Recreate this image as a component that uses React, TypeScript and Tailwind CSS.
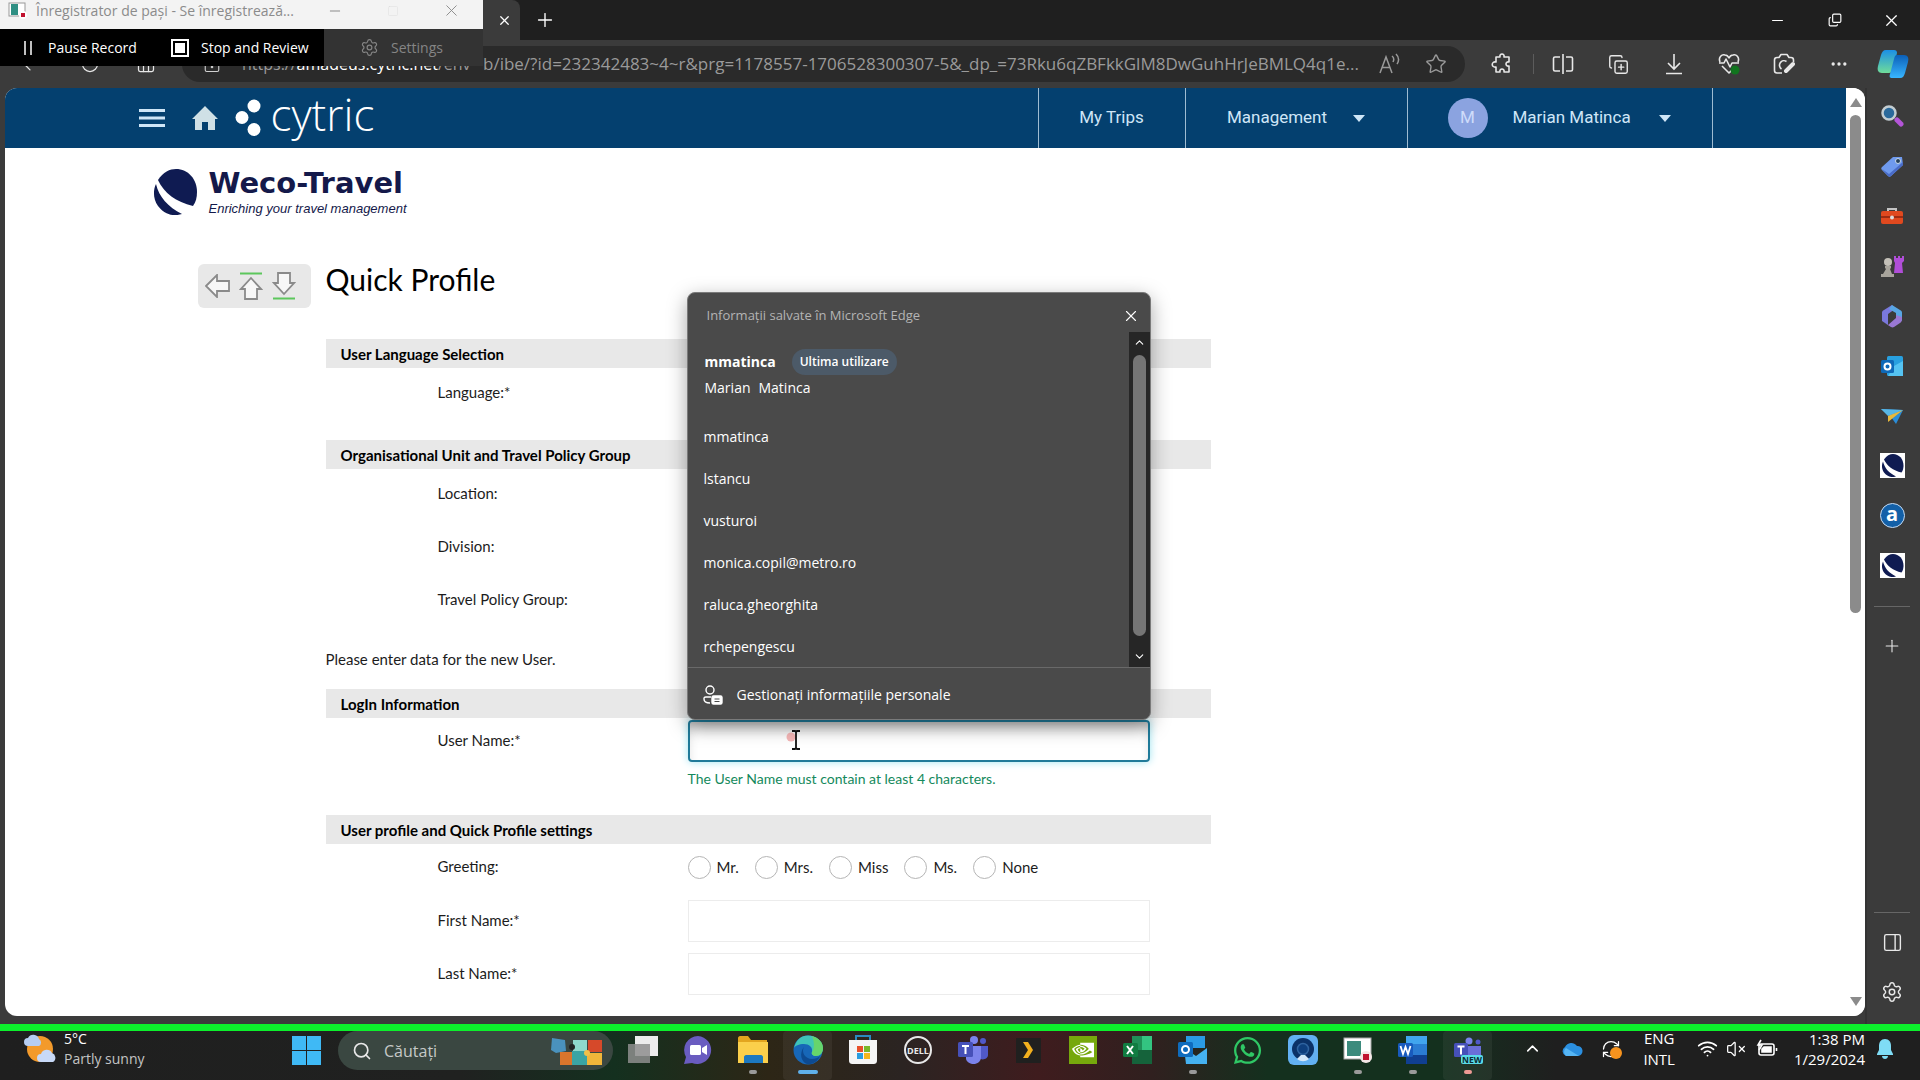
import type {ReactNode} from "react";
import {
  ChevronDown, ChevronUp, Copy, CopyPlus, Ellipsis, House, LockKeyhole,
  Minus, PanelRight, Pause, Plus, RefreshCw, RotateCw, Search, Settings, Square, Star, VolumeX, Wifi, X, ArrowLeft,
} from "lucide-react";
import {FaWhatsapp} from "react-icons/fa";
import {SiNvidia} from "react-icons/si";
import clsx from "clsx";

const suggestions = ["mmatinca", "lstancu", "vusturoi", "monica.copil@metro.ro", "raluca.gheorghita", "rchepengescu"];
const greetings = ["Mr.", "Mrs.", "Miss", "Ms.", "None"];

function Globe({className}: { className?: string }) {
  return (
    <svg viewBox="0 0 44 46" className={className}>
      <path d="M5 11C10 3 17 0 23 0c12 0 21 10 21 23 0 5-1 10-4 14C23 33 11 24 5 11Z" fill="#0f1b52"/>
      <path d="M3 15C0 21 0 30 5 37c6 8 15 11 24 8C15 38 6 28 3 15Z" fill="#0f1b52"/>
    </svg>
  );
}

function IconButton({label, children, className}: { label: string; children: ReactNode; className?: string }) {
  return (
    <button type="button" aria-label={label} className={clsx("flex shrink-0 items-center justify-center", className)}>
      {children}
    </button>
  );
}

/* Floating steps recorder window */
function Recorder() {
  return (
    <div className="absolute left-0 top-0 z-20 w-[483px] text-[14px]">
      <div className="flex h-[29px] items-center bg-[#f3f3f3] pb-2 text-[#8b8b8b]">
        <svg viewBox="0 0 20 18" className="ml-2 h-[18px] w-5 shrink-0">
          <rect x="1" y="1" width="16" height="13" fill="#fff" stroke="#999"/>
          <rect x="3" y="2" width="7" height="11" fill="#2f8f83"/>
          <circle cx="15" cy="13" r="4" fill="#fff"/>
          <rect x="13" y="11" width="4" height="4" fill="#c1122f"/>
        </svg>
        <span className="ml-2 w-[270px] whitespace-nowrap">Înregistrator de pași - Se înregistrează...</span>
        <IconButton label="Minimize" className="ml-3 w-[34px]"><Minus size={16} strokeWidth={1.5}/></IconButton>
        <IconButton label="Maximize" className="ml-6 w-[34px]"><Square size={12} strokeWidth={1} className="text-[#dddddd]"/></IconButton>
        <IconButton label="Close" className="ml-6 w-[34px]"><X size={19} strokeWidth={1.2}/></IconButton>
      </div>
      <div className="flex h-[37px] bg-black text-white">
        <button type="button" className="flex w-[156px] items-center gap-3 pl-5">
          <svg viewBox="0 0 16 16" className="size-4" stroke="#fff" strokeWidth="1.500"><path d="M5 1v14M11 1v14"/></svg>
          Pause Record
        </button>
        <button type="button" className="flex w-[168px] items-center gap-3 pl-[15px]">
          <span className="flex size-[18px] items-center justify-center border-2 border-white"><span className="size-[10px] bg-white"/></span>
          Stop and Review
        </button>
        <button type="button" className="flex flex-1 items-center gap-3 bg-[#333333] pl-9 text-[#858585]">
          <Settings size={19} strokeWidth={1.5}/>
          Settings
        </button>
      </div>
    </div>
  );
}

function TitleBar() {
  return (
    <div className="flex h-10 shrink-0 items-center bg-[#1f1f1f] text-white">
      <div className="flex h-10 w-[520px] items-center justify-end rounded-tr-lg bg-[#3b3b3b] pr-2">
        <IconButton label="Close tab"><X size={15} strokeWidth={2}/></IconButton>
      </div>
      <IconButton label="New tab" className="ml-3.5"><Plus size={22} strokeWidth={1.5}/></IconButton>
      <div className="ml-auto flex">
        <IconButton label="Minimize" className="w-[57px]"><Minus size={17} strokeWidth={1.5}/></IconButton>
        <IconButton label="Restore" className="w-[57px]"><Copy size={14} strokeWidth={2} className="-rotate-90"/></IconButton>
        <IconButton label="Close" className="w-[57px]"><X size={19} strokeWidth={1.5}/></IconButton>
      </div>
    </div>
  );
}

function CopilotIcon() {
  return (
    <svg viewBox="0 0 32 30" className="h-[30px] w-8">
      <defs>
        <linearGradient id="cop1" x1="0" y1="0" x2="0" y2="1"><stop stopColor="#1b8fe6"/><stop offset="1" stopColor="#6fdc9a"/></linearGradient>
        <linearGradient id="cop2" x1="0" y1="0" x2="0" y2="1"><stop stopColor="#0b5fb8"/><stop offset="1" stopColor="#38b6ff"/></linearGradient>
      </defs>
      <path d="M9 1h8c2 0 3 1 3 3l-4 16c-1 3-2 4-4 4H5c-4 0-5-3-4-7L4 6c1-3 2-5 5-5Z" fill="url(#cop1)"/>
      <path d="M20 6h7c4 0 5 3 4 7l-3 11c-1 3-2 5-5 5h-8c-2 0-3-1-2-4l4-15c1-3 1-4 3-4Z" fill="url(#cop2)"/>
    </svg>
  );
}

function Toolbar() {
  return (
    <div className="flex h-12 shrink-0 items-center bg-[#3b3b3b] text-[#e8e8e8]">
      <div className="flex w-[182px] shrink-0 items-center">
        <IconButton label="Back" className="ml-5"><ArrowLeft size={20} strokeWidth={1.5}/></IconButton>
        <IconButton label="Refresh" className="ml-10"><RotateCw size={20} strokeWidth={1.5}/></IconButton>
        <IconButton label="Home" className="ml-9"><House size={20} strokeWidth={1.5}/></IconButton>
      </div>
      <div className="flex h-[36px] min-w-0 flex-1 items-center rounded-full bg-[#2a2a2a] pr-[18px] text-[17px] text-[#9a9a9a]">
        <LockKeyhole size={18} strokeWidth={1.5} className="ml-[21px] shrink-0 text-[#d0d0d0]"/>
        <span className="ml-[21px] w-[241px] shrink-0 whitespace-nowrap text-[16px]">https://<span className="text-white">amadeus.cytric.net</span>/env</span>
        <span className="whitespace-nowrap">b/ibe/?id=232342483~4~r&amp;prg=1178557-1706528300307-5&amp;_dp_=73Rku6qZBFkkGlM8DwGuhHrJeBMLQ4q1e...</span>
        <button type="button" aria-label="Read aloud" className="ml-auto shrink-0 pl-4">
          <svg viewBox="0 0 22 22" className="size-[22px]" fill="none" stroke="currentColor" strokeWidth="1.500">
            <path d="M1 20 7 4l6 16M3 14.500h8M13 3c2 1.500 2 4 1 6M17 1c3 3 3 7 1 10"/>
          </svg>
        </button>
        <IconButton label="Add to favourites" className="ml-6"><Star size={22} strokeWidth={1.5}/></IconButton>
      </div>
      <div className="flex shrink-0 items-center">
        <IconButton label="Extensions" className="ml-[18px] w-[38px]">
          <svg viewBox="0 0 22 22" className="size-[22px]" fill="none" stroke="currentColor" strokeWidth="1.600" strokeLinejoin="round">
            <path d="M5 4h4c-1-4 5-4 4 0h5v5c-4-1-4 5 0 4v6h-5c1-4-5-4-4 0H5v-5c-5 1-5-6 0-5Z"/>
          </svg>
        </IconButton>
        <span className="ml-3 h-5 w-px bg-[#5c5c5c]"/>
        <IconButton label="Split screen" className="w-[57px]">
          <svg viewBox="0 0 22 22" className="size-[22px]" fill="none" stroke="currentColor" strokeWidth="1.600">
            <path d="M11 1v20M8 4H3c-1 0-1.500.5-1.500 1.500v11c0 1 .5 1.500 1.500 1.500h5M14 4h5c1 0 1.500.5 1.500 1.500v11c0 1-.5 1.500-1.500 1.500h-5"/>
          </svg>
        </IconButton>
        <IconButton label="Collections" className="w-[55px]"><CopyPlus size={21} strokeWidth={1.6}/></IconButton>
        <IconButton label="Downloads" className="w-[55px]">
          <svg viewBox="0 0 20 22" className="h-[22px] w-5" fill="none" stroke="currentColor" strokeWidth="1.600"><path d="M10 1v15M4 10l6 6 6-6M2 20.500h16"/></svg>
        </IconButton>
        <IconButton label="Browser essentials" className="w-[55px]">
          <svg viewBox="0 0 22 22" className="size-[22px]" fill="none" stroke="currentColor" strokeWidth="1.600" strokeLinejoin="round">
            <path d="M2 9C0 4 4 1 7 2c2 0 3 1 4 3 1-2 2-3 4-3 3-1 7 2 5 7M4 13l7 7 3-3M1 10h5l2-4 4 8 2-4h7"/>
            <circle cx="17" cy="17" r="4.500" fill="#11751f" stroke="none"/>
          </svg>
        </IconButton>
        <IconButton label="Web capture" className="w-[55px]">
          <svg viewBox="0 0 22 22" className="size-[22px]" fill="none" stroke="currentColor" strokeWidth="1.600" strokeLinejoin="round">
            <path d="M9 20H4c-2 0-2.500-1-2.500-2.500V7C1.500 5 2 4.500 4 4.500h2L8 1.500h6l2 3h2c2 0 2.500.5 2.500 2.500v2"/>
            <path d="M13.500 8.500a4.500 4.500 0 1 0-5 7.500"/>
            <path d="M20 11l-7 7" strokeWidth="4" strokeLinecap="round"/>
          </svg>
        </IconButton>
        <IconButton label="More" className="w-[55px]"><Ellipsis size={20} strokeWidth={2}/></IconButton>
        <IconButton label="Copilot" className="w-[54px]"><CopilotIcon/></IconButton>
      </div>
    </div>
  );
}

function Caret() {
  return <svg viewBox="0 0 12 7" className="h-[7px] w-3" fill="currentColor"><path d="M0 0h12L6 7Z"/></svg>;
}

function SiteHeader() {
  return (
    <header className="flex h-[60px] shrink-0 bg-[#04406f] font-[Roboto,sans-serif] text-[17px] text-[#cfe6f7]">
      <div className="mx-auto flex w-full max-w-[1574px]">
        <IconButton label="Menu">
          <svg viewBox="0 0 26 20" className="h-5 w-[26px]" fill="#cfe6f7"><path d="M0 1h26v3H0zM0 8.500h26v3H0zM0 16h26v3H0z"/></svg>
        </IconButton>
        <IconButton label="Home" className="ml-[27px]">
          <svg viewBox="0 0 26 24" className="h-6 w-[26px]" fill="#cfe0e6"><path d="M13 0 26 13h-3v11h-7v-8h-6v8H3V13H0Z"/></svg>
        </IconButton>
        <a href="#home" className="ml-[17px] flex items-center gap-[10px] text-white">
          <svg viewBox="0 0 26 38" className="h-[38px] w-[26px]" fill="#fff">
            <circle cx="19" cy="7" r="6.500"/><circle cx="7" cy="18.500" r="6.500"/><circle cx="19" cy="30.500" r="6.500"/>
          </svg>
          <span className="pb-2 font-['Open_Sans',sans-serif] text-[44px] font-light leading-[50px]">cytric</span>
        </a>
        <nav className="ml-auto flex border-r border-[#9fbcd2]">
          <a href="#trips" className="flex w-[147px] items-center justify-center border-l border-[#9fbcd2]">My Trips</a>
          <button type="button" className="flex w-[222px] items-center justify-center gap-[26px] border-l border-[#9fbcd2]">Management<Caret/></button>
          <button type="button" className="flex w-[305px] items-center border-l border-[#9fbcd2] pl-10">
            <span className="mr-[25px] flex size-10 items-center justify-center rounded-full bg-[#8ba3e0] text-[17px] text-[#cfdcfa]">M</span>
            <span className="mr-[28px]">Marian Matinca</span>
            <Caret/>
          </button>
        </nav>
      </div>
    </header>
  );
}

function SectionBar({children}: { children: ReactNode }) {
  return <h2 className="h-[29px] bg-[#e8e8e8] px-[15px] font-bold leading-[30px] text-black">{children}</h2>;
}

function Field({id, label, children}: { id: string; label: string; children?: ReactNode }) {
  return (
    <div className="flex pl-28">
      <label htmlFor={id} className="w-[250px] shrink-0 leading-10">{label}</label>
      <div className="mr-[61px] min-w-0 flex-1">
        {children ?? <input id={id} type="text" className="block h-[42px] w-full border border-[#ececec] px-3"/>}
      </div>
    </div>
  );
}

/* Browser autofill list, opens above the user name box */
function AutofillPopup() {
  return (
    <div className="absolute -inset-x-px bottom-full z-10 overflow-hidden rounded-lg border border-[#7a7a7a] bg-[#4a4a4a] font-['Open_Sans',sans-serif] text-[14px] text-white shadow-[0_6px_20px_rgba(0,0,0,0.35)]">
      <div className="flex h-[39px] items-center justify-between pl-[19px] pr-[10px] text-[13px] text-[#b4b4b4]">
        <span className="pt-1.5">Informații salvate în Microsoft Edge</span>
        <IconButton label="Close suggestions" className="pt-1.5 text-white"><X size={18} strokeWidth={1.5}/></IconButton>
      </div>
      <div className="flex h-[335px]">
        <ul className="min-w-0 flex-1 overflow-hidden pl-4">
          <li className="pb-[14px] pt-[17px]">
            <button type="button" className="block pl-px text-left">
              <span className="flex items-center gap-4 leading-[26px]">
                <b>mmatinca</b>
                <span className="rounded-full bg-[#4c5a68] px-2 text-[12px] font-semibold">Ultima utilizare</span>
              </span>
              <span className="flex gap-2 leading-[26px]"><span>Marian</span><span>Matinca</span></span>
            </button>
          </li>
          {suggestions.map((s) => (
            <li key={s} className="flex h-[42px] items-center"><button type="button">{s}</button></li>
          ))}
        </ul>
        <div className="flex w-[21px] flex-col items-center justify-between bg-[#262626] py-1">
          <ChevronUp size={13}/>
          <span className="my-[6px] w-[13px] flex-1 rounded-full bg-[#757575]"/>
          <ChevronDown size={13} className="mt-2"/>
        </div>
      </div>
      <button type="button" className="flex h-[52px] w-full items-center gap-[14px] border-t border-[#696969] pl-[15px] pt-0.5">
        <svg viewBox="0 0 20 20" className="size-5" fill="none" stroke="#fff" strokeWidth="1.400">
          <circle cx="7" cy="5" r="4"/>
          <path d="M8 12H3c-2 0-2 1-2 2 0 2 2 4 6 4"/>
          <rect x="9" y="11" width="10" height="8" rx="1.500" fill="#fff"/>
          <path d="M11.500 14h5M11.500 16.500h5" stroke="#4a4a4a" strokeWidth="1"/>
        </svg>
        Gestionați informațiile personale
      </button>
    </div>
  );
}

function PageTools() {
  return (
    <div className="flex h-11 w-[113px] shrink-0 items-center gap-[9px] rounded-md bg-[#e8e8e8] pl-[7px]">
      <IconButton label="Back">
        <svg viewBox="0 0 25 24" className="h-6 w-[25px]" fill="#f7f7f7" stroke="#8a8a8a" strokeWidth="1.800"><path d="M1 12 12 1v6h12v10H12v6Z"/></svg>
      </IconButton>
      <IconButton label="Top of page">
        <svg viewBox="0 0 24 28" className="h-7 w-6" fill="#f7f7f7" stroke="#8a8a8a" strokeWidth="1.800">
          <path d="M1 1.500h22" stroke="#5cc75c" strokeWidth="2"/><path d="M12 6 22 17h-4v10H6V17H2Z"/>
        </svg>
      </IconButton>
      <IconButton label="End of page">
        <svg viewBox="0 0 24 28" className="h-7 w-6" fill="#f7f7f7" stroke="#8a8a8a" strokeWidth="1.800">
          <path d="M1 26.500h22" stroke="#5cc75c" strokeWidth="2"/><path d="M12 22 22 11h-4V1H6v10H2Z"/>
        </svg>
      </IconButton>
    </div>
  );
}

function ProfilePage() {
  return (
    <main className="mx-auto w-full max-w-[1574px] font-[Lato,sans-serif] text-[15px] text-[#1c1c1c]">
      <div className="flex gap-3 pl-[14px] pt-[21px]">
        <Globe className="h-[46px] w-11"/>
        <div className="text-[#14194a]">
          <div className="font-['DejaVu_Sans',sans-serif] text-[29px] font-bold leading-7">Weco-Travel</div>
          <div className="pt-0.5 font-['Liberation_Sans',sans-serif] text-[13px] italic leading-5">Enriching your travel management</div>
        </div>
      </div>
      <div className="flex items-start gap-[15px] pl-[59px] pt-[45px]">
        <PageTools/>
        <form className="w-full max-w-[885px]">
          <h1 className="mb-[45px] text-[30px] leading-[30px] text-black">Quick Profile</h1>
          <SectionBar>User Language Selection</SectionBar>
          <div className="mb-[26px] mt-1"><Field id="language" label="Language:*"/></div>
          <SectionBar>Organisational Unit and Travel Policy Group</SectionBar>
          <div className="mt-1 flex flex-col gap-[11px]">
            <Field id="location" label="Location:"/>
            <Field id="division" label="Division:"/>
            <Field id="policy" label="Travel Policy Group:"/>
          </div>
          <p className="mb-5 mt-7 leading-5">Please enter data for the new User.</p>
          <SectionBar>LogIn Information</SectionBar>
          <div className="mb-[26px] mt-0.5">
            <Field id="username" label="User Name:*">
              <div className="relative">
                <AutofillPopup/>
                <input id="username" type="text" aria-describedby="username-hint"
                  className="block h-[42px] w-full rounded-sm border-2 border-[#1f7a99] px-3 shadow-[0_0_8px_#9fe4f0,inset_0_10px_14px_-6px_rgba(0,0,0,0.3)] outline-none"/>
                <svg viewBox="0 0 16 20" className="pointer-events-none absolute left-[98px] top-[10px] h-5 w-4">
                  <circle cx="5" cy="7" r="4.500" fill="#f4b6b6"/>
                  <path d="M6 1h3l1 1 1-1h3M6 19h3l1-1 1 1h3M10 2v16" stroke="#111" strokeWidth="1.800" fill="none"/>
                </svg>
              </div>
              <p id="username-hint" className="mt-[7px] text-[14px] leading-5 text-[#14895c]">The User Name must contain at least 4 characters.</p>
            </Field>
          </div>
          <SectionBar>User profile and Quick Profile settings</SectionBar>
          <div className="mt-0.5 flex flex-col gap-[11px]">
            <div role="radiogroup" aria-labelledby="greeting" className="flex h-[43px] pl-28">
              <span id="greeting" className="w-[250px] shrink-0 leading-10">Greeting:</span>
              <div className="flex items-center gap-4">
                {greetings.map((g) => (
                  <label key={g} className="flex items-center gap-[6px]">
                    <input type="radio" name="greeting" className="size-[23px] appearance-none rounded-full border border-[#b5b5b5] bg-white"/>
                    {g}
                  </label>
                ))}
              </div>
            </div>
            <Field id="first" label="First Name:*"/>
            <Field id="last" label="Last Name:*"/>
          </div>
        </form>
      </div>
    </main>
  );
}

function PageScrollbar() {
  return (
    <div className="flex w-[19px] shrink-0 flex-col items-center bg-white py-[10px] text-[#8b8b8b]">
      <svg viewBox="0 0 12 9" className="h-[9px] w-3" fill="currentColor"><path d="M6 0l6 9H0Z"/></svg>
      <div className="my-2 flex w-[11px] flex-1 flex-col"><span className="h-[57%] rounded-full bg-[#8b8b8b]"/></div>
      <svg viewBox="0 0 12 9" className="h-[9px] w-3" fill="currentColor"><path d="M6 9l6-9H0Z"/></svg>
    </div>
  );
}

const sideIcons: { name: string; icon: ReactNode }[] = [
  {name: "Search", icon: <><path d="M17 16l4 4" stroke="#b455d8" strokeWidth="5" strokeLinecap="round"/><circle cx="9" cy="9" r="6.500" fill="#2b6a9c" stroke="#c3cdd2" strokeWidth="2.500"/></>},
  {name: "Shopping", icon: <><path d="M13 3h9l1 8-12 11c-1 1-2 1-3 0l-6-6c-1-1-1-2 0-3Z" fill="#6f9aee"/><path d="M2 15l6 7c1 1 2 1 3 0L23 11v-3L9 20Z" fill="#4a6cc8"/><circle cx="18" cy="7" r="2.500" fill="#26425e" stroke="#c9d8e8"/></>},
  {name: "Tools", icon: <><path d="M8 8V5h8v3" fill="none" stroke="#c4c4c4" strokeWidth="2"/><rect x="1" y="7" width="22" height="13" rx="2" fill="#e0491f"/><path d="M1 12h22v2H1Z" fill="#9c2c12"/><circle cx="12" cy="13.500" r="2" fill="#ddd"/></>},
  {name: "Games", icon: <><path d="M14 2h2v2h2V2h2v2h2V2h2v5l-2 2 1 10h-9l1-10-1-2Z" fill="#b04ed8"/><circle cx="8" cy="8" r="4" fill="#c4c0b8"/><path d="M5 12h6v2l-1 1 2 5h2v3H1v-3h2l3-5-1-1Z" fill="#a8a49c"/></>},
  {name: "Microsoft 365", icon: <><path d="M12 1 4 6C2 7 2 8 2 9v8l6 4V10l7-5Z" fill="#7a78dc"/><path d="M12 1l8 5c2 1 2 2 2 3v8l-6-4V9L9 5Z" fill="#58a6e4"/><path d="M8 21l-5-3 8 5c1 .5 2 .5 3 0l6-4c2-1 2-3 2-6l-6-2v3Z" fill="#9a78d4"/></>},
  {name: "Outlook", icon: <><rect x="7" y="2" width="16" height="20" rx="1.500" fill="#28a0e0"/><path d="M14 12l9-5v15H8Z" fill="#55c3f2"/><rect x="1" y="6" width="13" height="13" rx="1.500" fill="#0f69b8"/><circle cx="7.500" cy="12.500" r="3" fill="none" stroke="#fff" strokeWidth="2"/></>},
  {name: "Drop", icon: <><path d="M1 5l22 1-7 14-5-7Z" fill="#2b8cd6"/><path d="M1 5l22 1L8 12Z" fill="#58b7e6"/><path d="M23 6 8 12v6Z" fill="#e8b93c"/></>},
];

function EdgeSidebar() {
  return (
    <aside className="flex w-[55px] shrink-0 flex-col items-center border-l-2 border-[#333] bg-[#3b3b3b] pb-[7px] pr-[3px] pt-[5px] text-[#e8e8e8]">
      {sideIcons.map(({name, icon}) => (
        <IconButton key={name} label={name} className="h-[50px] w-10 pb-[5px]">
          <svg viewBox="0 0 24 24" className="size-6">{icon}</svg>
        </IconButton>
      ))}
      <IconButton label="Weco-Travel" className="h-[50px] pb-[5px]"><span className="bg-white p-px"><Globe className="size-[23px]"/></span></IconButton>
      <IconButton label="Amadeus" className="h-[50px] pb-[5px]">
        <span className="flex size-[25px] items-center justify-center rounded-full border border-[#c5dcf5] bg-[#1360a8] pb-1 text-[20px] font-bold leading-none text-white">a</span>
      </IconButton>
      <IconButton label="Weco-Travel portal" className="h-[50px] pb-[5px]"><span className="bg-white p-px"><Globe className="size-[23px]"/></span></IconButton>
      <span className="mt-[13px] h-px w-9 bg-[#666]"/>
      <IconButton label="Customize" className="h-[78px]"><Plus size={20} strokeWidth={1.3}/></IconButton>
      <span className="mt-auto h-px w-9 bg-[#666]"/>
      <IconButton label="Hide sidebar" className="mt-1 h-[50px]"><PanelRight size={21} strokeWidth={1.6}/></IconButton>
      <IconButton label="Settings" className="h-[50px]"><Settings size={22} strokeWidth={1.6}/></IconButton>
    </aside>
  );
}

const taskApps: { name: string; mark?: string; active?: boolean; icon: ReactNode }[] = [
  {name: "Task view", icon: <><rect x="8" y="1" width="23" height="20" fill="#ececec"/><rect x="1" y="9" width="22" height="19" fill="#8e8e8e" opacity=".85"/></>},
  {name: "Chat", icon: <><path d="M16 1a14 14 0 1 1-6 27l-8 1 2-7A14 14 0 0 1 16 1Z" fill="#6a5cc0"/><rect x="8" y="10" width="11" height="10" rx="1.500" fill="#fff"/><path d="m20 13 5-3v10l-5-3Z" fill="#fff"/></>},
  {name: "File Explorer", mark: "w-2 bg-[#9a9a9a]", icon: <><path d="M1 3c0-1 1-2 2-2h8l3 4h16v23H1Z" fill="#e3a51f"/><path d="M1 7h30v21H1Z" fill="#fbcf4b"/><path d="M7 28v-6c0-1 1-2 2-2h15c1 0 2 1 2 2v6Z" fill="#1c78c0"/></>},
  {name: "Microsoft Edge", active: true, mark: "w-5 bg-[#5fb0ea]", icon: <><circle cx="16" cy="15" r="14.500" fill="#1767b8"/><path d="M2 13C4 5 9 .5 16 .5 24 .5 31 6 31 13c0 5-3 8-7 8-3 0-5-2-4-4 1-5-3-8-8-8-5 0-9 2-10 4Z" fill="#3fc4b8"/><path d="M20 1c7 2 11 7 11 12s-3 8-7 8c-3 0-5-2-4-4 2-2 3-9 0-16Z" fill="#66d56c"/><path d="M12 12c-3 5 1 12 8 12 3 0 6-1 8-3-2 5-7 9-13 8-6-2-8-11-3-17Z" fill="#0d4a91"/></>},
  {name: "Microsoft Store", icon: <><path d="M9 7V1h14v6" fill="none" stroke="#2a8ac0" strokeWidth="2"/><path d="M2 5h28v20c0 3-1 4-4 4H6c-3 0-4-1-4-4Z" fill="#f5f5f5"/><path d="M10 11h6v6h-6z" fill="#e8502b"/><path d="M17 11h6v6h-6z" fill="#79b829"/><path d="M10 18h6v6h-6z" fill="#2a9de0"/><path d="M17 18h6v6h-6z" fill="#f4b61e"/></>},
  {name: "Dell", icon: <><circle cx="16" cy="15" r="13" fill="none" stroke="#e8e8e8" strokeWidth="2"/><text x="16" y="18.500" textAnchor="middle" fontSize="9" fontWeight="bold" fill="#e8e8e8">DELL</text></>},
  {name: "Teams", icon: <><circle cx="17" cy="5" r="4" fill="#7b83eb"/><circle cx="26" cy="6" r="3" fill="#5059c9"/><path d="M21 11h10v9c0 4-6 6-9 3Z" fill="#5059c9"/><path d="M9 11h15v11c0 9-13 9-15 2Z" fill="#7b83eb"/><rect x="1" y="7" width="15" height="15" rx="1.500" fill="#4650b8"/><path d="M5 11h7M8.500 11v8" stroke="#fff" strokeWidth="2"/></>},
  {name: "Plex", icon: <><rect x="4" y="3" width="25" height="25" fill="#20201f"/><path d="M11 7h5l5 8-5 8h-5l5-8Z" fill="#f2b01e"/></>},
  {name: "NVIDIA", icon: <><rect x="2" y="1" width="28" height="28" fill="#76a80c"/><g transform="translate(5 4)"><SiNvidia size={22} color="#fff"/></g></>},
  {name: "Excel", icon: <><path d="M10 1h20v28H10Z" fill="#1f8f58"/><path d="M20 1h10v14H20Z" fill="#33c481"/><path d="M10 15h20v14H10Z" fill="#15633b"/><rect x="1" y="8" width="15" height="14" rx="1.500" fill="#107c41"/><path d="m5 11 6 8M11 11l-6 8" stroke="#fff" strokeWidth="2"/></>},
  {name: "Outlook", mark: "w-2 bg-[#9a9a9a]", icon: <><path d="M9 1h19v12H9Z" fill="#2a9ae4"/><path d="M7 13l12 8 11-8v16H9Z" fill="#45b1f0"/><rect x="1" y="7" width="15" height="15" rx="1.500" fill="#0f6cbd"/><circle cx="8.500" cy="14.500" r="3.500" fill="none" stroke="#fff" strokeWidth="2"/></>},
  {name: "WhatsApp", icon: <FaWhatsapp size={31} color="#2fc765"/>},
  {name: "Remote assist", icon: <><rect x="1" y="0" width="30" height="30" rx="6" fill="#62b0f2"/><circle cx="16" cy="14" r="11" fill="#0b3268"/><circle cx="16" cy="14" r="5.500" fill="#0e3f7e" stroke="#2f639f" strokeWidth="1.500"/><path d="M10 24l4-4h4l4 4c-4 3-8 3-12 0Z" fill="#d3e7fa"/></>},
  {name: "Steps recorder", mark: "w-2 bg-[#9a9a9a]", icon: <><rect x="2" y="3" width="27" height="21" fill="#fff" stroke="#a8a8a8"/><rect x="5" y="6" width="14" height="15" fill="#3c8b7d"/><circle cx="24" cy="22" r="6" fill="#f4e6e6"/><rect x="21" y="19" width="6" height="6" fill="#c0122f"/></>},
  {name: "Word", mark: "w-2 bg-[#9a9a9a]", icon: <><path d="M9 1h21v28H9Z" fill="#2b7cd3"/><path d="M9 1h21v8H9Z" fill="#41a5ee"/><path d="M9 20h21v9H9Z" fill="#103f91"/><rect x="1" y="8" width="15" height="14" rx="1.500" fill="#185abd"/><path d="m3.500 11 2.500 8 2.500-7 2.500 7 2.500-8" fill="none" stroke="#fff" strokeWidth="1.800"/></>},
  {name: "Teams (new)", mark: "w-2 bg-[#ee9a94]", active: true, icon: <><circle cx="17" cy="6" r="3.500" fill="#7b83eb"/><circle cx="26" cy="7" r="2.500" fill="#5059c9"/><path d="M11 11h18v12H11Z" fill="#6a6fd8"/><rect x="2" y="8" width="14" height="14" rx="1.500" fill="#4650b8"/><path d="M5.500 11.500h7M9 11.500v8" stroke="#fff" strokeWidth="2"/><rect x="9" y="20" width="22" height="9" rx="2" fill="#5adbe8"/><text x="20" y="27.500" textAnchor="middle" fontSize="8.500" fontWeight="bold" fill="#0a2c33">NEW</text></>},
];

function Taskbar() {
  return (
    <footer className="flex h-[49px] shrink-0 bg-[linear-gradient(90deg,#1f1f1f_0%,#202120_24%,#14301f_32%,#2d2616_40%,#2b2422_47%,#3f1c1e_54%,#30201f_60%,#14301e_66%,#14301e_75%,#1f1f1f_81%)] text-[15px] text-white">
      <button type="button" className="flex w-[292px] items-center gap-2 pb-3.5 pl-6 text-left">
        <svg viewBox="0 0 32 30" className="h-[30px] w-8">
          <circle cx="16" cy="15" r="13" fill="#f39a2b"/>
          <path d="M4 12a4 4 0 0 1 0-8 6 6 0 0 1 11 1 4 4 0 0 1 0 7Z" fill="#b6cdf2"/>
          <path d="M17 28a4 4 0 0 1 0-8 6 6 0 0 1 11-1 5 5 0 0 1 1 9Z" fill="#c8d9f7"/>
        </svg>
        <span className="flex flex-col text-[14px] leading-5"><span>5°C</span><span className="text-[#c4c4c4]">Partly sunny</span></span>
      </button>
      <IconButton label="Start" className="w-[29px] pb-2.5">
        <svg viewBox="0 0 29 29" className="size-[29px]" fill="#3fb9f5"><path d="M0 0h14v14H0zM15 0h14v14H15zM0 15h14v14H0zM15 15h14v14H15z"/></svg>
      </IconButton>
      <label className="ml-[17px] flex h-[39px] w-[275px] shrink-0 items-center rounded-full bg-[#3a4741] pl-3.5 pr-2.5">
        <Search size={20} strokeWidth={2} className="shrink-0 text-[#e8e8e8]"/>
        <input type="search" placeholder="Căutați" className="ml-3 w-0 flex-1 bg-transparent text-[16px] outline-none placeholder:text-[#c6c9c7]"/>
        <svg viewBox="0 0 52 28" className="h-7 w-[52px]">
          <path d="M1 1 14 3l1 11-10 2-5-3Z" fill="#4a92bd"/><path d="M9 15h12v13H9Z" fill="#d9752c"/>
          <path d="M22 3h14v12H22Z" fill="#8fd8cc"/><path d="M21 14h15v14H21Z" fill="#3aa4a4"/>
          <path d="M37 3h14v12H37Z" fill="#d6492a"/><path d="M36 16h15v12H36Z" fill="#f0b53a"/>
          <circle cx="21" cy="10" r="3" fill="#222"/><circle cx="36" cy="16" r="3" fill="#f0c04a"/>
        </svg>
      </label>
      <div className="ml-[2px] flex">
        {taskApps.map(({name, icon, mark, active}) => (
          <div key={name} className="flex w-[55px] justify-center">
            <button type="button" aria-label={name} className={clsx("flex w-[49px] flex-col items-center pt-1", active && "rounded bg-white/5")}>
              <svg viewBox="0 0 32 30" className="h-[30px] w-8">{icon}</svg>
              {mark && <span className={clsx("mt-[5px] h-1 rounded-full", mark)}/>}
            </button>
          </div>
        ))}
      </div>
      <div className="ml-auto flex items-center pb-3.5">
        <IconButton label="Hidden icons" className="w-10"><ChevronUp size={19}/></IconButton>
        <svg viewBox="0 0 22 14" className="ml-[9px] h-3.5 w-[22px]"><path d="M5 14a5 5 0 0 1-1-9 7 7 0 0 1 12-1 5 5 0 0 1 1 10Z" fill="#2b8fe0"/><path d="M5 14a5 5 0 0 1 0-8l13 8Z" fill="#56b5f4"/></svg>
        <span className="relative ml-[18px]"><RefreshCw size={20} strokeWidth={1.5}/><span className="absolute -right-px bottom-0 size-3 rounded-full bg-[#f7931e]"/></span>
        <span className="ml-[22px] flex flex-col items-center leading-[21px]"><span>ENG</span><span>INTL</span></span>
        <Wifi size={21} strokeWidth={2} className="ml-[22px]"/>
        <VolumeX size={20} strokeWidth={1.5} className="ml-2"/>
        <svg viewBox="0 0 22 20" className="ml-2.5 h-5 w-[22px]" fill="none" stroke="#fff" strokeWidth="1.600">
          <rect x="3" y="5" width="15" height="11" rx="2"/><path d="M20.500 9v3"/><path d="M8 8h7v5H6v-3Z" fill="#fff"/><path d="M5 1 2 6h4L3 11" stroke="#fff"/>
        </svg>
        <span className="ml-4 flex flex-col items-end leading-5"><span>1:38 PM</span><span>1/29/2024</span></span>
        <svg viewBox="0 0 16 20" className="ml-3 mr-[27px] h-5 w-4" fill="#7fdcf5"><path d="M8 0c4 0 6 3 6 7v4l2 4v1H0v-1l2-4V7c0-4 2-7 6-7ZM5 17h6c0 4-6 4-6 0Z"/></svg>
      </div>
    </footer>
  );
}

export default function App() {
  return (
    <div className="relative flex h-screen flex-col overflow-hidden bg-[#3b3b3b] font-['Open_Sans',sans-serif]">
      <Recorder/>
      <TitleBar/>
      <Toolbar/>
      <div className="flex min-h-0 flex-1">
        <div className="mb-2 ml-[5px] flex min-w-0 flex-1 overflow-hidden rounded-xl bg-white">
          <div className="flex min-w-0 flex-1 flex-col overflow-hidden">
            <SiteHeader/>
            <ProfilePage/>
          </div>
          <PageScrollbar/>
        </div>
        <EdgeSidebar/>
      </div>
      <div className="h-[7px] shrink-0 bg-[#0cf02c]"/>
      <Taskbar/>
    </div>
  );
}
